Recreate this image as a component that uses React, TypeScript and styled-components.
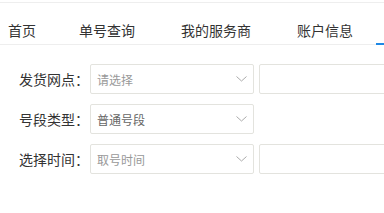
import styled, { createGlobalStyle } from "styled-components";

const GlobalStyle = createGlobalStyle`
  html, body {
    margin: 0;
    padding: 0;
    background: #fff;
    overflow: hidden;
  }
  body {
    font-family: "Noto Sans CJK SC", "Noto Sans", sans-serif;
    color: #333;
  }
`;

const Page = styled.div`
  width: 384px;
  height: 213px;
  padding-top: 2px;
  box-sizing: border-box;
  overflow: hidden;
`;

const TabBar = styled.div`
  display: flex;
  border-top: 1px solid #eeeeee;
  border-bottom: 1px solid #eeeeee;
  white-space: nowrap;
`;

const Tab = styled.div<{ $active?: boolean }>`
  flex: none;
  padding: 17px 23px 3px;
  font-size: 14px;
  line-height: 20px;
  color: #333;
  margin-bottom: ${(p) => (p.$active ? "-1px" : "0")};
  border-bottom: ${(p) => (p.$active ? "2px solid #1e88e5" : "none")};
  &:first-child {
    padding-left: 8px;
    padding-right: 20px;
  }
`;

const Form = styled.div`
  display: flex;
  flex-direction: column;
  gap: 10px;
  padding-top: 19px;
`;

const Row = styled.div`
  display: flex;
  align-items: center;
  gap: 5px;
`;

const Label = styled.label`
  flex: none;
  width: 90px;
  margin-right: -5px;
  padding-left: 19px;
  box-sizing: border-box;
  font-size: 14px;
  color: #333;
  white-space: nowrap;
`;

const Select = styled.div<{ $filled?: boolean }>`
  flex: none;
  width: 164px;
  height: 30px;
  box-sizing: border-box;
  border: 1px solid #e3e3de;
  border-radius: 2px;
  display: flex;
  align-items: center;
  justify-content: space-between;
  padding: 0 6px;
  font-size: 12px;
  color: ${(p) => (p.$filled ? "#666" : "#999")};
`;

const Input = styled.div`
  flex: none;
  width: 164px;
  height: 30px;
  box-sizing: border-box;
  border: 1px solid #e3e3de;
  border-radius: 2px;
  display: flex;
  align-items: center;
  padding: 0 6px;
  font-size: 12px;
  color: #999;
`;

const Chevron = () => (
  <svg width="11" height="6" viewBox="0 0 11 6">
    <path d="M0.5 0.5 L5.5 5 L10.5 0.5" fill="none" stroke="#aaa" strokeWidth="1" />
  </svg>
);

export default function App() {
  const tabs = ["首页", "单号查询", "我的服务商", "账户信息", "其他设置"];
  return (
    <Page>
      <GlobalStyle />
      <TabBar>
        {tabs.map((t, i) => (
          <Tab key={t} $active={i === 4}>
            {t}
          </Tab>
        ))}
      </TabBar>
      <Form>
        <Row>
          <Label>发货网点：</Label>
          <Select>
            请选择
            <Chevron />
          </Select>
          <Input />
        </Row>
        <Row>
          <Label>号段类型：</Label>
          <Select $filled>
            普通号段
            <Chevron />
          </Select>
        </Row>
        <Row>
          <Label>选择时间：</Label>
          <Select>
            取号时间
            <Chevron />
          </Select>
          <Input />
        </Row>
      </Form>
    </Page>
  );
}
